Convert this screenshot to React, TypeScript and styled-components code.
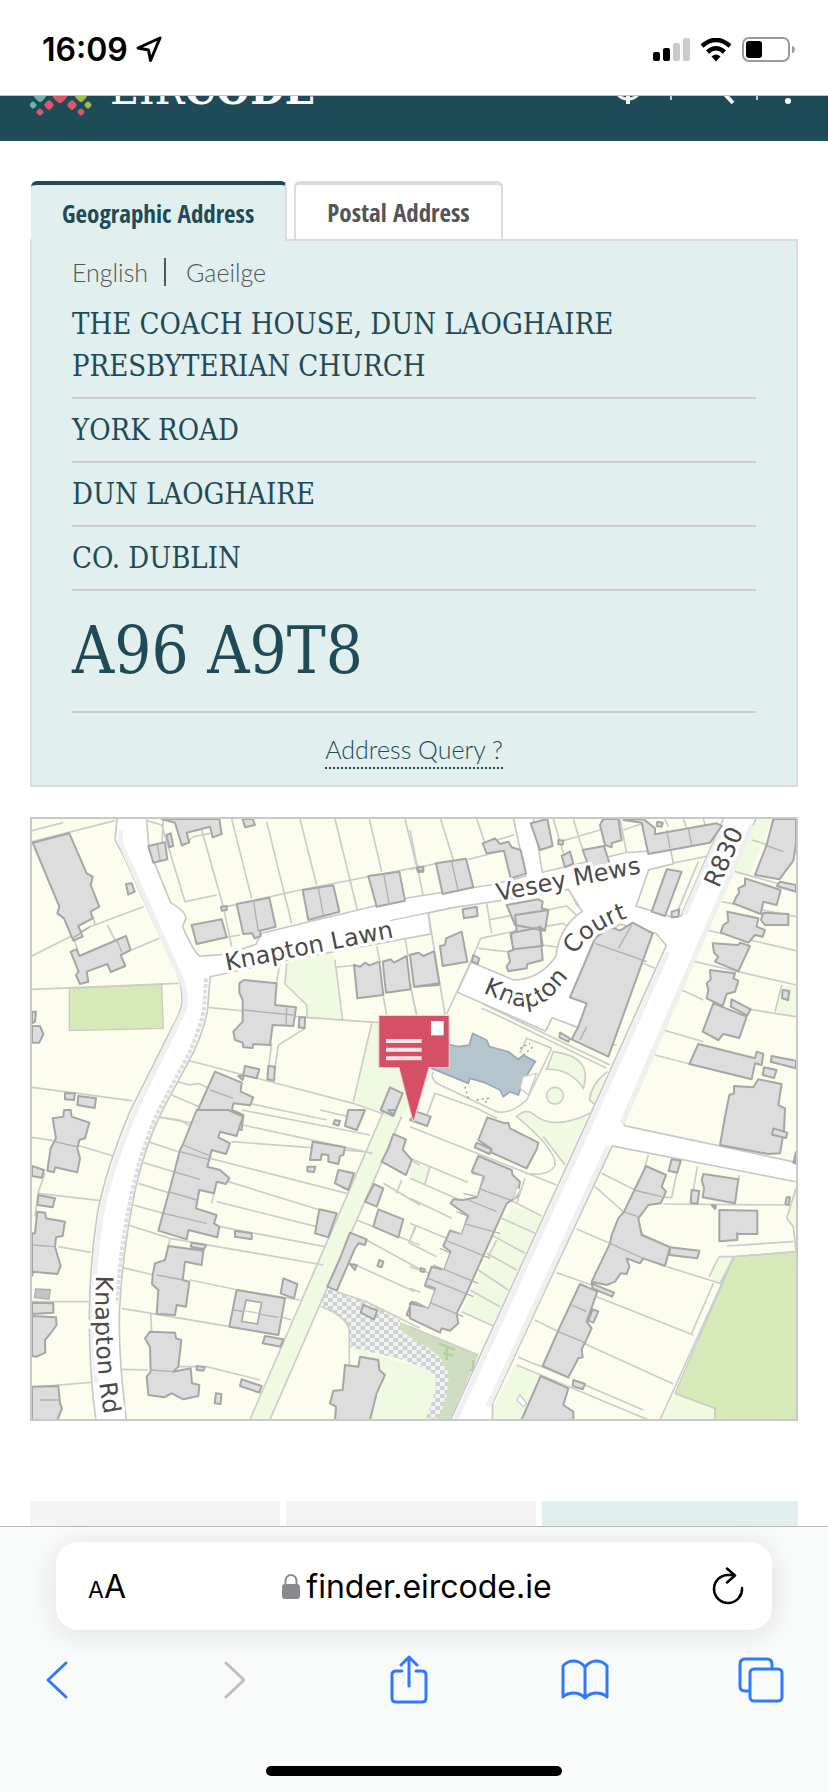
import React from "react";
import styled, { createGlobalStyle } from "styled-components";

const colors = {
  teal: "#1f4b59",
  mint: "#e1efee",
  rule: "#cfcfcf",
  edge: "#dcdcdc",
  text: "#555555",
  blue: "#3079fe",
};

const condensed = `"Open Sans Condensed", "Lato", sans-serif`;
const light = `"Lato", "Open Sans", sans-serif`;
const slab = `"DejaVu Serif Condensed", "DejaVu Serif", serif`;
const system = `"Inter", "Liberation Sans", sans-serif`;

const GlobalStyle = createGlobalStyle`
  *, *::before, *::after { box-sizing: border-box; }
  body { margin: 0; background: #fff; font-family: ${system}; }
  button { font: inherit; color: inherit; background: none; border: 0; padding: 0; cursor: pointer; }
  a { color: inherit; text-decoration: none; }
  svg { display: block; }
`;

const Screen = styled.div`
  min-height: 100vh;
  display: flex;
  flex-direction: column;
`;

const StatusBar = styled.div`
  height: 96px;
  padding: 4px 33px 0 42px;
  display: flex;
  align-items: center;
  justify-content: space-between;
  border-bottom: 1px solid #bcc0c2;
`;

const StatusGroup = styled.div<{ $gap: number }>`
  display: flex;
  align-items: center;
  gap: ${(p) => p.$gap}px;
`;

const Time = styled.time`
  font-size: 32px;
  line-height: 40px;
  font-weight: 600;
  color: #000;
`;

const SiteHeader = styled.header`
  height: 45px;
  overflow: hidden;
  display: flex;
  align-items: flex-end;
  background: ${colors.teal};
  color: #fff;
`;

const HeaderInner = styled.div`
  flex: 1;
  padding: 0 30px 24px;
  display: flex;
  justify-content: space-between;
  align-items: flex-end;
`;

const Brand = styled.a`
  display: flex;
  align-items: flex-end;
  gap: 18px;
`;

const Wordmark = styled.span`
  font-family: ${slab};
  font-size: 44px;
  line-height: 56px;
  b { font-weight: 700; }
`;

const Main = styled.main`
  flex: 1;
  padding: 40px 30px 0;
  display: flex;
  flex-direction: column;
`;

const Tabs = styled.div`
  display: flex;
  gap: 7px;
  padding-left: 1px;
`;

const Tab = styled.button<{ $active?: boolean }>`
  height: ${(p) => (p.$active ? 60 : 58)}px;
  margin-bottom: ${(p) => (p.$active ? -2 : 0)}px;
  padding: 0 31px;
  position: relative;
  font-family: ${condensed};
  font-size: 25px;
  line-height: 32px;
  font-weight: 700;
  color: ${(p) => (p.$active ? colors.teal : colors.text)};
  background: ${(p) => (p.$active ? colors.mint : "#fff")};
  border: 2px solid ${colors.edge};
  border-left-width: ${(p) => (p.$active ? 0 : 2)}px;
  border-top: 4px solid ${(p) => (p.$active ? colors.teal : colors.edge)};
  border-bottom: 0;
  border-radius: 6px 6px 0 0;
`;

const Panel = styled.section`
  padding: 0 40px;
  background: ${colors.mint};
  border: 2px solid ${colors.edge};
`;

const Languages = styled.nav`
  height: 62px;
  display: flex;
  align-items: center;
  gap: 20px;
  font-family: ${light};
  font-weight: 300;
  font-size: 25px;
  line-height: 32px;
  color: ${colors.text};
`;

const Divider = styled.span`
  width: 2px;
  height: 28px;
  margin-left: -4px;
  background: ${colors.text};
`;

const AddressLine = styled.div<{ $first?: boolean }>`
  padding: ${(p) => (p.$first ? 0 : 10)}px 0 10px;
  border-bottom: 2px solid ${colors.rule};
  font-family: ${slab};
  font-size: 29px;
  line-height: 42px;
  color: ${colors.teal};
`;

const Eircode = styled.h1`
  margin: 0;
  border-bottom: 2px solid ${colors.rule};
  font-family: ${slab};
  font-size: 65px;
  line-height: 120px;
  font-weight: 400;
  color: ${colors.teal};
`;

const QueryRow = styled.div`
  padding: 18px 0 16px;
  display: flex;
  justify-content: center;
`;

const QueryLink = styled.a`
  font-family: ${light};
  font-weight: 300;
  font-size: 25px;
  line-height: 36px;
  color: ${colors.teal};
  border-bottom: 2px dotted ${colors.teal};
`;

const MapFrame = styled.div`
  margin: 30px 0 80px;
  border: 2px solid #c8c9c9;
  background: #fcfdec;
  svg { width: 100%; height: auto; }
`;

const Cards = styled.div`
  flex: 1;
  min-height: 25px;
  display: grid;
  grid-template-columns: 250fr 250fr 256fr;
  gap: 6px;
`;

const Card = styled.div<{ $tint?: boolean }>`
  background: ${(p) => (p.$tint ? colors.mint : "#f4f4f4")};
`;

const BrowserBar = styled.footer`
  padding: 15px 0 16px;
  display: flex;
  flex-direction: column;
  align-items: center;
  border-top: 1px solid #bcbebe;
  background: #f9fafa;
`;

const AddressBar = styled.div`
  align-self: stretch;
  margin: 0 56px;
  height: 88px;
  padding: 0 28px 0 32px;
  display: grid;
  grid-template-columns: 62px 1fr 60px;
  align-items: center;
  border-radius: 22px;
  background: #fff;
  color: #000;
  box-shadow: 0 4px 30px rgba(0, 20, 20, 0.11);
`;

const TextSize = styled.button`
  justify-self: start;
  padding-top: 4px;
  font-size: 32px;
  line-height: 40px;
  small { font-size: 23px; }
`;

const Url = styled.button`
  display: flex;
  align-items: center;
  justify-content: center;
  gap: 6px;
  font-size: 32px;
  line-height: 40px;
  span { padding-top: 2px; }
`;

const Reload = styled.button`
  justify-self: end;
`;

const Tools = styled.nav`
  align-self: stretch;
  height: 100px;
  padding: 0 43px 0 33px;
  display: flex;
  align-items: center;
  justify-content: space-between;
  color: ${colors.blue};
`;

const Tool = styled.button`
  width: 48px;
  display: flex;
  justify-content: center;
  &:disabled { color: #bfbfc0; cursor: default; }
`;

const HomeIndicator = styled.div`
  width: 296px;
  height: 10px;
  margin-top: 36px;
  border-radius: 5px;
  background: #000;
`;

/* ---------- Map data: four sheets drawn at three units per pixel ---------- */

type Sheet = { x: number; y: number; lawns: string; lines: string; buildings: string };

const roads = [
  // Knapton Road
  "M295 10L288 90L310 130L470 480Q492 530 488 580Q484 610 460 650L335 900Q262 1070 235 1210Q205 1400 212 1600Q216 1740 232 1840L318 1840Q292 1640 296 1500Q305 1320 345 1130Q375 1000 425 900L500 760Q545 680 560 600L568 500L620 440L540 442Q520 430 485 350L495 325Q495 305 450 280L385 120L375 10Z",
  // Knapton Lawn
  "M530 442L620 435L710 405L725 372L1170 265L1420 226L1520 200L1480 10L1535 10L1565 190L1820 130L1950 122L1957 160L1880 178L1650 235L1470 265L1290 292L1170 318L1222 308L1230 370L780 452L560 500Z",
  // Knapton Court
  "M1640 225L1690 305Q1620 350 1610 440Q1560 512 1480 512L1355 460L1315 545L1575 660L1595 620L1680 652L1700 582L1650 565L1725 390L1800 340L1910 368L1945 410L1985 320L1960 325L1845 290L1885 175Z",
  // R830
  "M2120 10L1985 320Q1970 335 1940 330L1905 360Q1945 380 1940 410L1720 900L1290 1840L1415 1840L1415 1780L1775 1005L2340 1115L2340 1062L1815 950Q1805 945 1810 935L2212 10Z",
];

const roadShade =
  "M2112 45L1994 312M1944 425L1728 905L1306 1830M2196 45L1805 940M1765 1008L1404 1790M303 60L300 95L480 500Q500 540 494 595L345 905Q270 1080 244 1215Q214 1400 222 1610L230 1720";

const sheets: Sheet[] = [
  {
    x: 0,
    y: 0,
    lawns:
      "M805 455L930 425L945 450L968 630L862 622L860 585L795 522ZM1055 640L1260 655L1260 760L1145 920L1090 910L1000 875Z",
    lines:
      "M36 62L130 38M36 95L285 32M36 438L210 350L370 290M262 345L300 420M220 320L225 345M335 420L418 385M36 538L475 520M36 832L335 872M160 380L175 430M380 32L425 45L495 275L590 255M545 60L610 290L635 410M635 27L695 265M740 35L815 340M840 27L890 225M945 27L1012 300M1048 27L1085 185M1155 27L1190 170M620 290L840 240L1200 170M725 372L1200 262M600 385L660 375M565 592L855 622L1080 638M945 472L1010 465M1070 410L1080 455M1155 385L1165 440M1090 560L1100 615M1175 545L1190 615M780 460L770 515M945 450L968 630L862 622L860 585L795 522L800 460M1055 640L1000 875M855 655L775 705L765 775M755 700L745 780M500 750L1000 880L1090 912M470 815L510 825L535 820L640 870L920 930M455 855L560 900M410 920L520 940M485 110L520 80L570 70M430 30L425 120M1110 330L1224 308",
    buildings:
      "M38 98L148 70L200 190L218 200L212 225L238 290L212 305L218 325L175 348L188 380L160 392L132 325L112 310L118 290ZM152 425L170 418L178 438L318 378L332 420L302 435L316 468L272 486L262 462L200 485L205 515L180 522L168 495L176 485ZM425 27L465 38L485 105L508 98L500 68L570 50L578 82L605 72L598 27ZM385 108L435 97L442 148L400 158ZM440 75L452 70L460 108L448 112ZM668 27L675 52L705 45L698 27ZM515 345L605 328L620 382L530 402ZM650 282L748 263L767 350L720 362L722 378L704 385L697 370L670 372ZM848 240L940 226L958 305L865 330ZM1045 198L1138 185L1155 272L1070 290ZM1190 175L1210 170L1210 185L1195 186ZM603 290L620 288L620 300L605 302ZM1002 465L1020 470L1035 458L1048 466L1078 455L1090 555L1012 565ZM1088 455L1112 448L1122 458L1160 438L1172 538L1098 548ZM1172 435L1190 430L1205 445L1240 425L1256 525L1185 530ZM658 520L672 510L770 520L765 585L828 592L820 648L758 645L750 705L700 702L698 714L670 712L668 698L645 690L640 665L668 635L668 570L658 548ZM838 622L855 622L854 655L836 652ZM745 768L765 770L762 812L742 808ZM675 768L718 778L710 805L670 795ZM655 798L672 795L668 810ZM585 785L665 818L662 845L700 862L690 886L640 880L636 900L670 915L665 960L520 930ZM1110 832L1148 850L1120 918L1082 900ZM135 850L165 850L162 870L135 868ZM175 858L228 865L224 894L172 885ZM36 605L48 605L45 635L36 640ZM36 648L60 648L70 672L58 698L36 698ZM318 222L335 220L344 245L325 254Z",
  },
  {
    x: 1170,
    y: 0,
    lawns:
      "M1042 27L1085 27L1020 192L970 185ZM430 725Q550 740 520 835Q480 775 410 778ZM410 857A25 25 0 1 0 460 857A25 25 0 1 0 410 857M592 785Q545 820 538 870L552 882ZM1115 525L1158 530L1158 618L1095 605Z",
    lines:
      "M92 27L130 150M200 27L225 100M0 60L40 260M0 178L80 160M175 148L285 120M225 100L312 75M430 27L460 130M490 27L515 110L570 200M450 95L570 60M630 27L650 130M700 40L640 60M765 27L775 50M820 27L830 55M880 27L885 45M230 280L245 370M235 330L310 315M55 310L105 615M0 520L18 610M212 385L380 350M212 385L180 460L110 612M205 415L290 425M395 405L450 412M400 350L460 340L500 370M410 300L470 288L515 330M480 235L500 285L530 310M710 178L675 290M785 160L910 135M865 155L800 310M975 185L1158 235M935 275L1158 320M890 360L1158 422M855 455L1158 525M815 540L880 570M1000 595L1158 620M760 660L880 695M735 735L840 762M215 580L600 765M215 595L240 605L590 775M410 660L425 620L510 655M700 460L735 475M590 700L620 705M425 715L350 685L330 730M425 715L350 870Q300 915 260 905L80 820Q60 800 70 785M45 930L75 850L200 895L260 925M1025 90L1158 130M1095 605L1115 525M430 725Q550 740 520 835Q480 775 410 778ZM410 857A25 25 0 1 0 460 857A25 25 0 1 0 410 857M592 785Q545 820 538 870L552 882",
    buildings:
      "M78 160L168 146L190 232L98 252ZM218 100L255 85L270 102L295 95L305 112L332 120L348 190L302 205L282 122L230 130ZM362 40L412 27L428 108L390 120ZM455 138L480 125L490 160L465 172ZM518 120L582 108L600 165L540 180ZM570 45L580 27L625 27L635 90L605 100L605 112L585 105ZM640 30L700 27L735 55L735 73L920 40L935 48L900 98L715 132L695 38ZM290 285L385 268L398 275L395 295L415 300L405 362L315 345ZM315 315L415 300L405 362L390 350L398 408L310 418L302 375L320 360ZM302 370L390 352L398 450L352 462L350 475L295 484L290 470L300 455L294 425L310 420ZM25 170L40 172L38 182L25 182ZM158 298L200 290L203 318L162 325ZM90 408L105 405L108 385L155 365L172 455L98 468ZM0 435L25 428L40 438L72 424L88 520L12 530ZM190 435L208 445L203 462L186 455ZM770 178L815 185L765 318L725 305ZM785 305L808 298L805 320L785 322ZM555 385L600 350L630 362L668 338L728 370L595 740L485 688L505 650L530 580L480 562ZM450 668L480 685L475 695L448 682ZM1090 27L1158 27L1158 100L1150 152L1108 208L1035 195L1070 105ZM1110 215L1158 225L1158 245L1100 228ZM1005 205L1112 240L1100 285L1060 275L1052 312L970 280L978 262L988 248L985 235L1005 225ZM952 305L1045 325L1040 350L1065 360L1058 380L1035 375L1015 398L932 368L940 345L955 335ZM1060 308L1135 312L1135 345L1065 345L1053 330ZM908 400L985 405L990 398L1020 408L985 484L915 455L925 440L912 428ZM900 480L975 490L970 505L985 512L975 545L950 552L938 588L890 565L895 540L890 520L902 508ZM965 568L1022 598L1012 616L962 590ZM910 580L1010 620L988 684L940 672L925 690L878 665ZM865 702L1035 745L1040 725L1060 732L1055 765L1035 760L1025 808L838 762ZM1085 738L1158 752L1158 775L1082 755ZM1062 772L1100 780L1092 804L1058 795ZM972 828L1030 832L1045 808L1115 822L1105 885L1125 895L1122 960L1110 1030L1075 1032L930 1005L945 920L958 855L972 850ZM1118 540L1138 543L1134 570L1116 565ZM742 35L758 38L755 50L740 48ZM445 90L460 92L458 104L445 102Z",
  },
  {
    x: 0,
    y: 900,
    lawns: "M1090 5L1150 5L745 940L685 940Z",
    lines:
      "M1090 5L685 940M1145 20L745 940M36 82L100 92M170 105L280 138M75 190L55 245L45 320M55 250L242 272M115 410L212 427M36 575L205 575M36 832L212 817M420 22L480 30L520 55M385 95L475 125M370 158L460 185M355 220L445 248M340 285L430 310M325 345L450 385L910 465M450 385L445 410M668 45L1058 130M665 0L1050 75M635 95L1035 125M570 145L980 250M625 215L900 300M585 235L575 280M590 275L890 350M600 350L915 410M305 472L400 495M510 510L655 540L840 570M305 595L630 650M392 612L395 665M305 778L385 780M460 770L560 770L720 810M780 620L815 630M985 20L900 0M1010 330L1200 405M1030 385L1200 478M1000 462L1185 545M1090 220L1200 285M1145 210L1130 250M1190 345L1165 400M950 545L1040 575L1200 655M905 590Q980 620 988 660L988 770M1170 150L1200 165",
    buildings:
      "M98 25L130 20L132 0L152 0L155 20L208 38L195 85L178 90L172 115L180 145L172 187L105 172L102 187L82 182L92 115L108 85ZM36 168L72 180L65 203L36 198ZM55 255L105 265L98 292L52 285ZM52 305L75 308L78 325L135 335L128 378L108 382L105 410L122 468L112 492L40 485L36 498L36 370L45 370ZM48 538L90 540L86 566L45 562ZM36 578L100 580L100 608L36 612ZM36 618L108 622L110 645L90 672L75 690L76 728L50 740L36 738ZM36 830L115 828L120 880L126 895L112 930L36 930ZM530 0L625 0L670 20L660 45L650 78L600 65L595 82L630 100L618 132L575 120L562 170L600 180L628 205L618 222L590 215L582 250L538 240L528 295L590 315L582 340L598 350L592 382L505 360L500 388L415 362L450 235L480 120L488 105ZM515 398L558 405L552 418L512 410ZM445 408L550 422L545 465L495 455L488 510L508 515L498 590L470 585L465 615L410 612L415 540L396 522L398 495L405 460L435 450ZM375 685L390 665L465 668L468 685L484 690L475 770L460 785L512 775L516 820L538 825L535 858L490 868L455 850L432 862L385 855L380 800L392 785L390 712ZM650 540L795 565L775 675L628 650ZM735 678L790 688L782 710L728 700ZM665 808L725 828L718 848L660 828ZM790 505L832 522L822 565L782 550ZM588 850L604 852L602 882L584 880ZM878 95L975 112L970 135L960 138L955 162L925 155L925 135L905 133L902 150L870 150ZM862 170L886 170L882 186L862 184ZM945 30L960 33L955 47L940 42ZM985 0L1035 0L1010 60L975 48ZM955 180L1002 190L985 240L945 220ZM898 298L950 310L925 382L885 370ZM990 368L1040 388L1035 405L1015 400L1005 415L950 542L922 530L958 450ZM1120 72L1158 88L1148 118L1175 150L1158 195L1085 155L1105 115ZM1062 222L1090 235L1070 290L1035 275ZM1075 298L1150 328L1135 382L1060 350ZM1030 585L1072 602L1062 628L1022 608ZM1175 575L1240 590L1240 650L1160 615ZM990 462L1010 465L1005 480ZM1078 450L1090 455L1085 472L1072 468ZM1020 740L1075 750L1078 780L1095 795L1070 850L1050 930L945 930L948 890L930 880L940 842L968 840L975 765L1015 770ZM645 362L695 370L695 388L645 380ZM530 768L555 772L550 782L530 780ZM1105 0L1125 0L1120 15Z",
  },
  {
    x: 1170,
    y: 900,
    lawns:
      "M535 10L465 165Q420 100 320 20Q350 -5 380 20Q440 60 535 10ZM305 285L395 320L250 648L155 605ZM0 160L58 172L45 222L0 205ZM795 850L915 895L915 940L750 940ZM925 440L972 440L930 520L898 500ZM315 765L385 797L330 940L245 940L245 905ZM1158 230L1130 320L1158 350Z",
    lines:
      "M0 50L440 225M345 190Q420 200 435 165Q440 120 320 20Q350 -10 380 20Q440 60 540 10M465 165L400 80M0 145L185 222M0 205L150 270M0 265L125 325M0 340L110 385M0 400L80 440M0 470L60 490M0 535L40 550M220 235L300 270L395 318M275 325L375 370M245 375L345 430M230 430L320 480M205 480L295 540M180 540L270 590M155 605L250 648M345 205L320 280M260 390L235 440M60 170L45 222M15 350L0 390M575 190L675 240M715 135L705 170M555 230L640 305M500 357L600 400M440 488L545 525M560 560L850 675M770 470L930 520L972 440L930 440Q925 440 898 500M375 630L445 665L790 822M325 742L480 805M320 765L740 940M525 825L700 900M910 520L845 670M972 440L750 930M795 850L915 895L915 930M805 165L785 262L760 262M862 170L850 240M760 282L1140 285M985 210L988 195M950 408L1150 395M972 440L1158 425M1158 235L1130 325L1150 350L1158 425M0 650L205 735M570 180L580 170",
    buildings:
      "M20 5L62 20L52 48L0 30ZM232 22L285 40L295 38L300 55L385 98L380 118L350 175L245 128L242 115L205 90ZM200 98L245 118L238 132L194 112ZM205 138L305 180L308 195L330 215L322 260L290 280L165 560L140 610L145 640L120 662L95 655L90 668L0 625L0 580L50 592L75 535L45 525L65 470L95 478L122 425L100 408L120 362L150 370L175 318L122 280L130 268L160 270L200 262L222 200L185 185ZM708 168L768 195L755 230L768 245L752 280L715 285L685 325L695 375L780 412L765 468L700 445L690 460L650 445L658 470L650 492L632 490L615 515L590 525L545 515L600 400L605 375L625 325L642 305ZM780 412L868 422L862 445L778 435ZM545 520L612 548L606 560L548 535ZM510 522L562 545L530 635L545 655L515 718L518 742L505 745L475 802L398 768L450 650ZM548 598L565 604L550 638L535 632ZM392 798L475 835L460 885L490 905L490 940L330 940ZM490 810L525 822L518 838L488 828ZM785 148L812 152L802 188L776 182ZM845 240L868 243L862 282L842 278ZM880 192L985 208L975 280L878 262L882 235L875 210ZM928 300L1042 302L1042 372L982 372L982 390L928 394ZM905 285L918 288L915 297ZM1090 55L1132 68L1128 84L1086 74ZM32 474L45 478L42 486L32 484ZM1130 262L1140 262L1136 285L1126 282ZM1158 125L1150 158L1158 160Z",
  },
];

const partyWalls =
  "M210 350L158 385M290 390L305 425M670 600L820 615M800 595L798 645M570 840L640 865M412 105L420 150M700 270L715 365M895 235L910 315M1092 195L1108 285M1295 155L1315 245M1725 400L1880 455M1795 415L1835 345M1700 650L1680 690M1940 60L1950 115M2005 55L2015 105M2235 105L2290 125M105 995L170 1010M40 1305L105 1310M490 1005L575 1040M480 1025L565 1048M460 1085L540 1108M445 1145L530 1170M430 1210L560 1240M410 1395L490 1410M390 1680L460 1685M60 1770L120 1770M640 1500L775 1522M1375 1135L1470 1170M1345 1170L1430 1205M1310 1235L1440 1270M1275 1290L1410 1345M1240 1365L1375 1420M1225 1405L1360 1460M1200 1465L1330 1520M1840 1140L1925 1160M1810 1205L1860 1222M1770 1300L1880 1350M1655 1485L1700 1505M1615 1565L1700 1600M2150 1265L2150 1290L2130 1290";

const TownMap = () => (
  <svg viewBox="36 27 2292 1800" role="img" aria-label="Map of Knapton Road, Knapton Lawn, Knapton Court, Vesey Mews and the R830">
    <defs>
      <pattern id="checker" width="28" height="24" patternUnits="userSpaceOnUse">
        <rect width="28" height="24" fill="#f0f4f2" />
        <path d="M0 0H14V12H0ZM14 12H28V24H14Z" fill="#d0d1d1" />
      </pattern>
      <path id="lawn-label" d="M620 482L1200 366" />
      <path id="mews-label" d="M1434 273L1950 173" />
      <path id="court-label-a" d="M1388 548L1450 574Q1540 612 1592 562L1690 450" />
      <path id="court-label-b" d="M1664 436Q1706 362 1840 318" />
      <path id="r830-label" d="M2096 236L2195 10" />
      <path id="road-label" d="M228 1396Q222 1570 236 1700Q244 1780 262 1850" />
    </defs>
    <rect x="36" y="27" width="2292" height="1800" fill="#fcfdec" />
    {sheets.map((s) => (
      <path key={`lawn-${s.x}-${s.y}`} transform={`translate(${s.x} ${s.y})`} d={s.lawns} fill="#f0fae0" />
    ))}
    <path d="M990 1612L1170 1665L1245 1690L1250 1750L1220 1830H1050L1095 1700Z" fill="#f0fae0" />
    <path d="M148 535L425 523L430 655L148 662ZM2142 1340L2330 1325V1830H2085V1795L1965 1750Z" fill="#d5eab8" stroke="#c9c9c9" strokeWidth="4" />
    <path d="M1140 1535L1375 1635L1290 1830H1250Q1300 1730 1270 1660Q1200 1600 1140 1560Z" fill="#cfdec0" />
    <path d="M1256 1600L1305 1620M1280 1610V1650M1270 1630L1300 1636M1360 1650V1700M1350 1680H1362" fill="none" stroke="#b3d09c" strokeWidth="7" />
    <path d="M920 1435L1050 1480L1140 1530Q1130 1560 1180 1590Q1290 1640 1285 1710Q1280 1780 1250 1830H1215Q1260 1730 1240 1690Q1200 1670 1150 1650L990 1612L985 1550Q950 1500 900 1490Z" fill="url(#checker)" />
    {sheets.map((s) => (
      <path key={`line-${s.x}-${s.y}`} transform={`translate(${s.x} ${s.y})`} d={s.lines} fill="none" stroke="#cccccb" strokeWidth="5" />
    ))}
    <path d="M1895 1182L1880 1185Q1835 1230 1870 1275L1950 1310" fill="none" stroke="#cccccb" strokeWidth="5" />
    {roads.map((d) => (
      <path key={d} d={d} fill="#fff" stroke="#c8c8c8" strokeWidth="10" strokeLinejoin="round" />
    ))}
    {roads.map((d) => (
      <path key={d} d={d} fill="#fff" />
    ))}
    <path d={roadShade} fill="none" stroke="#f0f0f0" strokeWidth="15" />
    <path d="M558 505L552 600Q534 680 494 755L414 905Q364 1020 342 1120Q299 1310 292 1480" fill="none" stroke="#dedede" strokeWidth="12" strokeDasharray="12 5" />
    <path d="M1110 332L1222 309" stroke="#cccccb" strokeWidth="4" />
    {sheets.map((s) => (
      <path key={`bldg-${s.x}-${s.y}`} transform={`translate(${s.x} ${s.y})`} d={s.buildings} fill="#dddddd" stroke="#a6a6a6" strokeWidth="6" strokeLinejoin="round" />
    ))}
    <path d={partyWalls} fill="none" stroke="#b0b0b0" strokeWidth="4" />
    <path d="M678 1470L725 1478L712 1542L665 1534Z" fill="#fcfdec" stroke="#a9a9a9" strokeWidth="5" />
    <path d="M670 1502L718 1510" stroke="#cccccb" strokeWidth="4" />
    <path d="M48 1438L90 1440L86 1466L45 1462Z" fill="#c4c4c8" />
    <path d="M1355 1090L1390 1098L1372 1160L1330 1150M1310 1205L1342 1218L1325 1272L1290 1260M1260 1315L1290 1328L1272 1378L1240 1365M1212 1428L1245 1440L1225 1495L1185 1475" fill="#fcfdec" stroke="#b4b4b4" strokeWidth="4" />
    <path d="M1240 702L1270 700L1315 710L1348 705L1358 670L1400 690L1408 710L1465 725L1495 748L1510 735L1546 755L1530 780L1510 815L1495 855L1470 845L1450 860L1440 840L1395 818L1350 805L1345 820L1235 775Z" fill="#b5c5ce" stroke="#98a8b2" strokeWidth="5" />
    <path d="M1510 800L1550 790L1525 855L1500 835ZM1490 1130L1502 1140L1480 1172ZM1490 1770L1500 1755L1520 1780L1510 1790Z" fill="#fff" stroke="#cccccb" strokeWidth="4" />
    <path d="M1500 715L1530 700M1510 735L1540 710M1335 830L1345 865M1370 870L1405 865L1395 880" fill="none" stroke="#999" strokeWidth="4" strokeDasharray="6 9" />
    <g fill="#4a4a4a" stroke="#fff" strokeWidth="20" strokeLinejoin="round" paintOrder="stroke" fontFamily="'DejaVu Sans', sans-serif" fontSize="72">
      <text><textPath href="#lawn-label">Knapton Lawn</textPath></text>
      <text><textPath href="#mews-label">Vesey Mews</textPath></text>
      <text><textPath href="#court-label-a">Knapton</textPath></text>
      <text><textPath href="#court-label-b">Court</textPath></text>
      <text><textPath href="#r830-label">R830</textPath></text>
      <text><textPath href="#road-label">Knapton Rd</textPath></text>
    </g>
    <path d="M1078 618H1286V771H1226L1180 932L1138 771H1078Z" fill="#d54f65" stroke="#f4cdd3" strokeWidth="6" />
    <path d="M1078 618H1286V771H1226L1180 932L1138 771H1078Z" fill="#d54f65" />
    <path d="M1233 633H1271V676H1233Z" fill="#fff" />
    <path d="M1098 693H1205M1098 719H1205M1098 745H1205" stroke="#fbe6ea" strokeWidth="12" />
  </svg>
);

/* ---------- Icons ---------- */

const LocationIcon = () => (
  <svg width="28" height="28" viewBox="0 0 28 28" fill="none" stroke="#000" strokeWidth="3" strokeLinejoin="round">
    <path d="M25 2L3 12L13.500 14L15.500 24.500Z" />
  </svg>
);

const SignalIcon = () => (
  <svg width="37" height="24" viewBox="0 0 37 24">
    <rect x="0" y="14" width="7" height="9" rx="2" />
    <rect x="10" y="10" width="7" height="13" rx="2" />
    <rect x="20" y="5" width="7" height="18" rx="2" fill="#cbcbcb" />
    <rect x="30" y="0" width="7" height="23" rx="2" fill="#cbcbcb" />
  </svg>
);

const WifiIcon = () => (
  <svg width="32" height="24" viewBox="0 0 32 24">
    <path d="M2 8Q16 -4 30 8" fill="none" stroke="#000" strokeWidth="4.500" />
    <path d="M7.500 14Q16 6.500 24.500 14" fill="none" stroke="#000" strokeWidth="4.500" />
    <path d="M11.500 18.500Q16 14.500 20.500 18.500L16 23.500Z" />
  </svg>
);

const BatteryIcon = () => (
  <svg width="53" height="25" viewBox="0 0 53 25">
    <rect x="1" y="1" width="46" height="23" rx="6" fill="none" stroke="#9b9b9b" strokeWidth="2" />
    <rect x="4" y="4" width="16" height="17" rx="3" />
    <path d="M50 8.500Q53 10 53 12.500T50 16.500Z" fill="#9b9b9b" />
  </svg>
);

const diamonds: [number, number, number, string][] = [
  [10, 21, 5, "#6bb5b0"], [30, 21, 6, "#de5569"], [51, 21, 5, "#a9b94a"],
  [3, 30, 3, "#6bb5b0"], [19, 30, 4, "#de5569"], [42, 30, 4, "#de5569"], [58, 30, 3, "#a9b94a"],
  [10, 37, 3, "#de5569"], [51, 37, 3, "#de5569"],
];

const LogoMark = () => (
  <svg width="62" height="42" viewBox="0 0 62 42">
    {diamonds.map(([x, y, r, fill]) => (
      <rect key={`${x}-${y}`} x={x - r} y={y - r} width={r * 2} height={r * 2} rx={r * 0.6} fill={fill} transform={`rotate(45 ${x} ${y})`} />
    ))}
  </svg>
);

const HeaderIcons = () => (
  <svg width="184" height="44" viewBox="0 0 184 44" fill="none" stroke="#f0f4f5" strokeWidth="3" aria-hidden="true">
    <circle cx="14" cy="12" r="14" />
    <path d="M14 18V31M107 17L119 30" strokeWidth="4" />
    <path d="M57 0V27M143 0V27" stroke="#c5cfd3" strokeWidth="2" />
    <circle cx="174" cy="28" r="3" fill="#fff" stroke="none" />
  </svg>
);

const LockIcon = () => (
  <svg width="18" height="27" viewBox="0 0 18 27">
    <path d="M3.500 13V7.500a5.500 5.500 0 0 1 11 0V13" fill="none" stroke="#8a8a8e" strokeWidth="2" />
    <rect y="11" width="18" height="15" rx="3" fill="#8a8a8e" />
  </svg>
);

const ReloadIcon = () => (
  <svg width="32" height="38" viewBox="0 0 32 38" fill="none" stroke="#000" strokeWidth="2.500" strokeLinecap="round" strokeLinejoin="round">
    <path d="M30 21A14 14 0 1 1 16 8H22M15 1.500L23 8.500L15 15.500" />
  </svg>
);

const BackIcon = () => (
  <svg width="24" height="40" viewBox="0 0 24 40" fill="none" stroke="currentColor" strokeWidth="3" strokeLinecap="round" strokeLinejoin="round">
    <path d="M21 3L3 20L21 37" />
  </svg>
);

const ForwardIcon = () => (
  <svg width="24" height="40" viewBox="0 0 24 40" fill="none" stroke="currentColor" strokeWidth="3" strokeLinecap="round" strokeLinejoin="round">
    <path d="M5 3L23 20L5 37" />
  </svg>
);

const ShareIcon = () => (
  <svg width="38" height="50" viewBox="0 0 38 50" fill="none" stroke="currentColor" strokeWidth="3" strokeLinecap="round" strokeLinejoin="round">
    <path d="M12 16H6Q2 16 2 20V43Q2 47 6 47H32Q36 47 36 43V20Q36 16 32 16H26M19 31V2M11 10L19 2L27 10" />
  </svg>
);

const BookIcon = () => (
  <svg width="48" height="42" viewBox="0 0 48 42" fill="none" stroke="currentColor" strokeWidth="3" strokeLinejoin="round">
    <path d="M24 8Q19 2 13 2Q6 2 2 7V38Q6 34 13 34Q19 34 24 39Q29 34 35 34Q42 34 46 38V7Q42 2 35 2Q29 2 24 8ZM24 8V39" />
  </svg>
);

const TabsIcon = () => (
  <svg width="46" height="46" viewBox="0 0 46 46" fill="none" stroke="currentColor" strokeWidth="3">
    <path d="M12 34H7Q2 34 2 29V7Q2 2 7 2H29Q34 2 34 7V12" />
    <rect x="12" y="12" width="32" height="32" rx="4" />
  </svg>
);

const addressLines = [
  "THE COACH HOUSE, DUN LAOGHAIRE PRESBYTERIAN CHURCH",
  "YORK ROAD",
  "DUN LAOGHAIRE",
  "CO. DUBLIN",
];

export default function App() {
  return (
    <Screen>
      <GlobalStyle />
      <StatusBar>
        <StatusGroup $gap={7}>
          <Time>16:09</Time>
          <LocationIcon />
        </StatusGroup>
        <StatusGroup $gap={10}>
          <SignalIcon />
          <WifiIcon />
          <BatteryIcon />
        </StatusGroup>
      </StatusBar>
      <SiteHeader>
        <HeaderInner>
          <Brand href="#">
            <LogoMark />
            <Wordmark>EIR<b>CODE</b></Wordmark>
          </Brand>
          <HeaderIcons />
        </HeaderInner>
      </SiteHeader>
      <Main>
        <Tabs role="tablist">
          <Tab $active role="tab" aria-selected="true">Geographic Address</Tab>
          <Tab role="tab" aria-selected="false">Postal Address</Tab>
        </Tabs>
        <Panel>
          <Languages aria-label="Language">
            <a href="#en">English</a>
            <Divider />
            <a href="#ga">Gaeilge</a>
          </Languages>
          {addressLines.map((line, i) => (
            <AddressLine key={line} $first={i === 0}>{line}</AddressLine>
          ))}
          <Eircode>A96 A9T8</Eircode>
          <QueryRow>
            <QueryLink href="#query">Address Query ?</QueryLink>
          </QueryRow>
        </Panel>
        <MapFrame>
          <TownMap />
        </MapFrame>
        <Cards>
          <Card />
          <Card />
          <Card $tint />
        </Cards>
      </Main>
      <BrowserBar>
        <AddressBar>
          <TextSize aria-label="Page settings"><small>A</small>A</TextSize>
          <Url>
            <LockIcon />
            <span>finder.eircode.ie</span>
          </Url>
          <Reload aria-label="Reload"><ReloadIcon /></Reload>
        </AddressBar>
        <Tools aria-label="Browser">
          <Tool aria-label="Back"><BackIcon /></Tool>
          <Tool aria-label="Forward" disabled><ForwardIcon /></Tool>
          <Tool aria-label="Share"><ShareIcon /></Tool>
          <Tool aria-label="Bookmarks"><BookIcon /></Tool>
          <Tool aria-label="Tabs"><TabsIcon /></Tool>
        </Tools>
        <HomeIndicator />
      </BrowserBar>
    </Screen>
  );
}
